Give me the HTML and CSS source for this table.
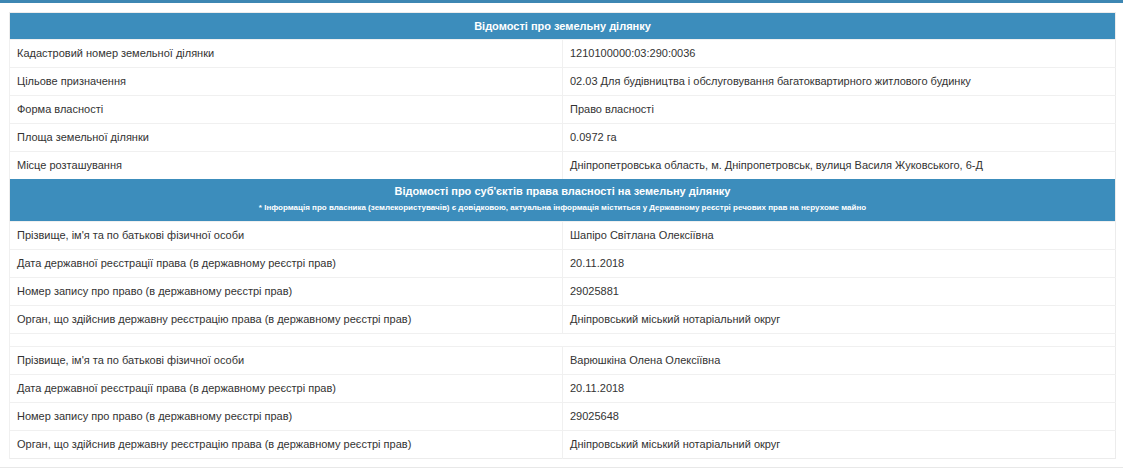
FILE: index.html
```html
<!DOCTYPE html>
<html lang="uk">
<head>
<meta charset="utf-8">
<title>Відомості про земельну ділянку</title>
<link rel="stylesheet" href="styles.css">
</head>
<body>
<div class="box">
  <div class="box-body">
    <table class="info">
      <tr class="head"><th colspan="2">Відомості про земельну ділянку</th></tr>
      <tr><td>Кадастровий номер земельної ділянки</td><td>1210100000:03:290:0036</td></tr>
      <tr><td>Цільове призначення</td><td>02.03 Для будівництва і обслуговування багатоквартирного житлового будинку</td></tr>
      <tr><td>Форма власності</td><td>Право власності</td></tr>
      <tr><td>Площа земельної ділянки</td><td>0.0972 га</td></tr>
      <tr><td>Місце розташування</td><td>Дніпропетровська область, м. Дніпропетровськ, вулиця Василя Жуковського, 6-Д</td></tr>
      <tr class="head head2"><th colspan="2">Відомості про суб'єктів права власності на земельну ділянку<div class="note">* Інформація про власника (землекористувачів) є довідковою, актуальна інформація міститься у Державному реєстрі речових прав на нерухоме майно</div></th></tr>
      <tr><td>Прізвище, ім'я та по батькові фізичної особи</td><td>Шапіро Світлана Олексіївна</td></tr>
      <tr><td>Дата державної реєстрації права (в державному реєстрі прав)</td><td>20.11.2018</td></tr>
      <tr><td>Номер запису про право (в державному реєстрі прав)</td><td>29025881</td></tr>
      <tr><td>Орган, що здійснив державну реєстрацію права (в державному реєстрі прав)</td><td>Дніпровський міський нотаріальний округ</td></tr>
      <tr class="empty"><td colspan="2"></td></tr>
      <tr><td>Прізвище, ім'я та по батькові фізичної особи</td><td>Варюшкіна Олена Олексіївна</td></tr>
      <tr><td>Дата державної реєстрації права (в державному реєстрі прав)</td><td>20.11.2018</td></tr>
      <tr><td>Номер запису про право (в державному реєстрі прав)</td><td>29025648</td></tr>
      <tr><td>Орган, що здійснив державну реєстрацію права (в державному реєстрі прав)</td><td>Дніпровський міський нотаріальний округ</td></tr>
    </table>
  </div>
</div>
</body>
</html>
```
FILE: styles.css
```css
html, body {
  margin: 0;
  padding: 0;
  background: #fff;
}
body {
  font-family: "Liberation Sans", Arial, sans-serif;
  font-size: 11px;
  color: #333;
}
.box {
  border-top: 3px solid #3d87b3;
  border-bottom: 1px solid #e8e8e8;
  background: #fff;
}
.box-body {
  padding: 9px 7px 8px 9px;
}
.info {
  width: 100%;
  border-collapse: collapse;
  border: 1px solid #ececec;
  table-layout: fixed;
}
.info td {
  width: 50%;
  padding: 6px 7px;
  line-height: 15px;
  border-top: 1px solid #f0f0f0;
  border-left: 1px solid #f0f0f0;
  vertical-align: middle;
  height: 15px;
}
.info tr.empty td {
  height: 0;
  padding: 6px 0 6px 0;
}
.info .head th {
  background: #3c8dbc;
  color: #fff;
  font-weight: bold;
  text-align: center;
  padding: 6px 8px 5px;
  line-height: 15px;
  height: 15px;
}
.info .head2 th {
  padding: 5px 8px 7px;
  height: auto;
}
.note {
  font-size: 8px;
  line-height: 13px;
  font-weight: bold;
  margin-top: 2px;
}
```
